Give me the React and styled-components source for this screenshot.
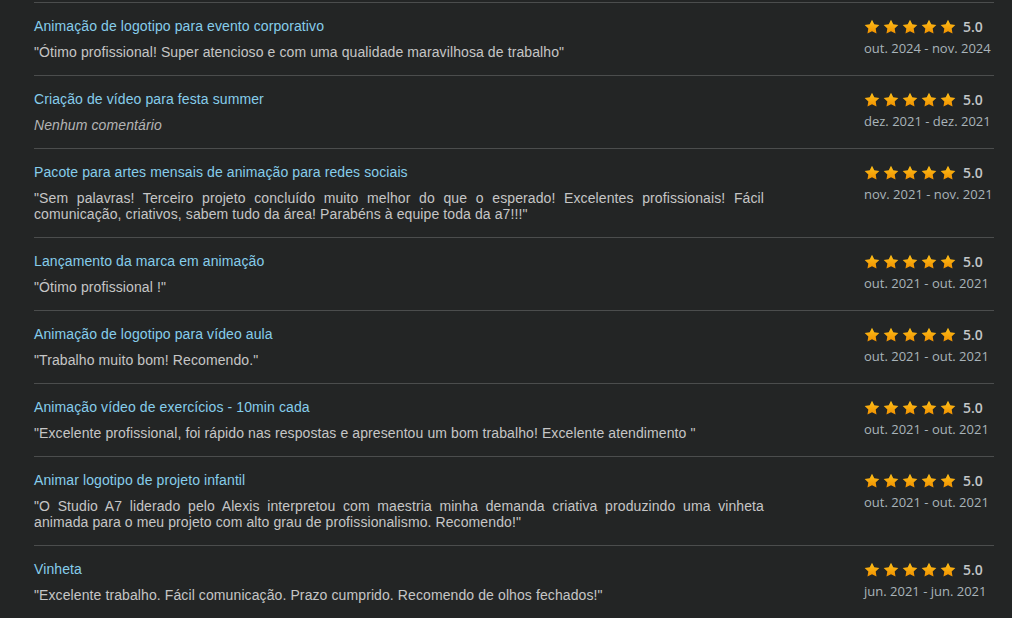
import styled, { createGlobalStyle } from 'styled-components';

const GlobalStyle = createGlobalStyle`
  html, body {
    margin: 0;
    background: #232525;
  }
`;

const reviews = [
  {
    id: 1,
    title: 'Animação de logotipo para evento corporativo',
    comment: '"Ótimo profissional! Super atencioso e com uma qualidade maravilhosa de trabalho"',
    period: 'out. 2024 - nov. 2024',
  },
  {
    id: 2,
    title: 'Criação de vídeo para festa summer',
    comment: null,
    period: 'dez. 2021 - dez. 2021',
  },
  {
    id: 3,
    title: 'Pacote para artes mensais de animação para redes sociais',
    comment:
      '"Sem palavras! Terceiro projeto concluído muito melhor do que o esperado! Excelentes profissionais! Fácil comunicação, criativos, sabem tudo da área! Parabéns à equipe toda da a7!!!"',
    period: 'nov. 2021 - nov. 2021',
  },
  {
    id: 4,
    title: 'Lançamento da marca em animação',
    comment: '"Ótimo profissional !"',
    period: 'out. 2021 - out. 2021',
  },
  {
    id: 5,
    title: 'Animação de logotipo para vídeo aula',
    comment: '"Trabalho muito bom! Recomendo."',
    period: 'out. 2021 - out. 2021',
  },
  {
    id: 6,
    title: 'Animação vídeo de exercícios - 10min cada',
    comment:
      '"Excelente profissional, foi rápido nas respostas e apresentou um bom trabalho! Excelente atendimento "',
    period: 'out. 2021 - out. 2021',
  },
  {
    id: 7,
    title: 'Animar logotipo de projeto infantil',
    comment:
      '"O Studio A7 liderado pelo Alexis interpretou com maestria minha demanda criativa produzindo uma vinheta animada para o meu projeto com alto grau de profissionalismo. Recomendo!"',
    period: 'out. 2021 - out. 2021',
  },
  {
    id: 8,
    title: 'Vinheta',
    comment: '"Excelente trabalho. Fácil comunicação. Prazo cumprido. Recomendo de olhos fechados!"',
    period: 'jun. 2021 - jun. 2021',
  },
];

const Star = () => (
  <svg width="16" height="16" viewBox="0 0 24 24">
    <defs>
      <linearGradient id="starFill" x1="0" y1="0" x2="0" y2="1">
        <stop offset="0%" stopColor="#ffc21a" />
        <stop offset="100%" stopColor="#f09000" />
      </linearGradient>
    </defs>
    <path
      d="M12 1l3.4 6.9 7.6 1.1-5.5 5.3 1.3 7.6L12 18.3l-6.8 3.6 1.3-7.6L1 9l7.6-1.1z"
      fill="url(#starFill)"
    />
  </svg>
);

const App = () => (
  <>
    <GlobalStyle />
    <List>
      {reviews.map(({ id, title, comment, period }) => (
        <Row key={id}>
          <Main>
            <Title>{title}</Title>
            {comment ? <Comment>{comment}</Comment> : <Empty>Nenhum comentário</Empty>}
          </Main>
          <Side>
            <Rating>
              <Stars>
                {[0, 1, 2, 3, 4].map(i => (
                  <Star key={i} />
                ))}
              </Stars>
              <Score>5.0</Score>
            </Rating>
            <Period>{period}</Period>
          </Side>
        </Row>
      ))}
    </List>
  </>
);

export default App;

const List = styled.div`
  width: 960px;
  margin-left: 34px;
  padding-top: 2px;
`;

const Row = styled.div`
  display: flex;
  align-items: flex-start;
  border-top: 1px solid #4b4d4d;
  padding: 15px 0;
`;

const Main = styled.div`
  width: 730px;
  display: flex;
  flex-direction: column;
  gap: 10px;
  font-family: 'Liberation Sans', Arial, sans-serif;
  font-size: 14px;
  line-height: 16px;
  letter-spacing: 0.1px;
`;

const Title = styled.div`
  color: #86cdeb;
`;

const Comment = styled.div`
  color: #c6c6c6;
  text-align: justify;
`;

const Empty = styled.div`
  color: #b4b4b4;
  font-style: italic;
`;

const Side = styled.div`
  margin-left: 100px;
  padding-top: 1px;
  display: flex;
  flex-direction: column;
  gap: 4px;
  font-family: 'Open Sans', sans-serif;
`;

const Rating = styled.div`
  display: flex;
  align-items: center;
  height: 16px;
  gap: 7px;
`;

const Stars = styled.div`
  display: flex;
  gap: 3px;
`;

const Score = styled.span`
  color: #c2c6c8;
  font-size: 14px;
  font-weight: 600;
  line-height: 16px;
`;

const Period = styled.div`
  color: #a9b4ba;
  font-size: 13px;
  line-height: 18px;
  white-space: nowrap;
`;
